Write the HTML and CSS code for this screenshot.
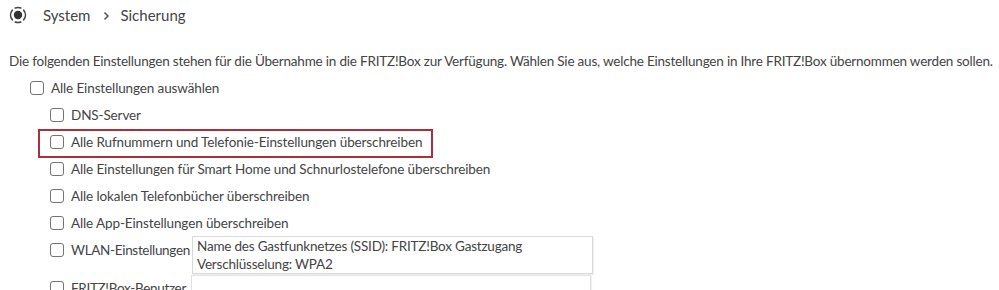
FILE: index.html
```html
<!DOCTYPE html>
<html lang="de">
<head>
    <meta charset="UTF-8">
    <meta name="viewport" content="width=device-width, initial-scale=1.0">
    <title>Sicherung</title>
    <link rel="stylesheet" href="styles.css">
</head>
<body>

<!-- Breadcrumb -->
<div class="crumbs">
    <svg class="crumb-icon" width="20" height="20" viewBox="0 0 20 20">
        <path d="M4.3 5.2 A7.6 7.6 0 0 0 4.3 14.8" fill="none" stroke="#444" stroke-width="1.6" stroke-linecap="round"/>
        <path d="M15.7 5.2 A7.6 7.6 0 0 1 15.7 14.8" fill="none" stroke="#444" stroke-width="1.6" stroke-linecap="round"/>
        <path d="M7.2 3 A7.6 7.6 0 0 1 12.8 3" fill="none" stroke="#444" stroke-width="1.6" stroke-linecap="round"/>
        <path d="M7.2 17 A7.6 7.6 0 0 0 12.8 17" fill="none" stroke="#444" stroke-width="1.6" stroke-linecap="round"/>
        <circle cx="10" cy="10" r="4.2" fill="#333"/>
    </svg>
    <span class="crumb">System</span>
    <svg class="crumb-sep" width="7" height="10" viewBox="0 0 7 10">
        <polyline points="1.5,1.5 5,5 1.5,8.5" fill="none" stroke="#555" stroke-width="1.5"/>
    </svg>
    <span class="crumb">Sicherung</span>
</div>

<p class="intro">Die folgenden Einstellungen stehen für die Übernahme in die FRITZ!Box zur Verfügung. Wählen Sie aus, welche Einstellungen in Ihre FRITZ!Box übernommen werden sollen.</p>

<!-- Auswahl -->
<ul class="options">
    <li>
        <label class="row"><span class="box"></span>Alle Einstellungen auswählen</label>
        <ul class="sub">
            <li><label class="row"><span class="box"></span>DNS-Server</label></li>
            <li><label class="row marked"><span class="box"></span>Alle Rufnummern und Telefonie-Einstellungen überschreiben</label></li>
            <li><label class="row"><span class="box"></span>Alle Einstellungen für Smart Home und Schnurlostelefone überschreiben</label></li>
            <li><label class="row"><span class="box"></span>Alle lokalen Telefonbücher überschreiben</label></li>
            <li><label class="row"><span class="box"></span>Alle App-Einstellungen überschreiben</label></li>
            <li class="with-info">
                <label class="row"><span class="box"></span>WLAN-Einstellungen</label>
                <div class="info">Name des Gastfunknetzes (SSID): FRITZ!Box Gastzugang<br>Verschlüsselung: WPA2</div>
            </li>
            <li class="with-info">
                <label class="row"><span class="box"></span>FRITZ!Box-Benutzer</label>
                <div class="info info-cut">&nbsp;</div>
            </li>
        </ul>
    </li>
</ul>

</body>
</html>
```
FILE: styles.css
```css
/* General page styling */
body {
    font-family: Lato, "Open Sans", sans-serif;
    font-size: 13.5px;
    letter-spacing: -0.2px;
    color: #444;
    margin: 0;
    padding: 0;
    background-color: #fff;
    overflow: hidden;
}

/* Breadcrumb */
.crumbs {
    display: flex;
    align-items: center;
    height: 30px;
    padding-left: 8px;
    font-size: 15px;
    letter-spacing: 0;
}

.crumb-icon {
    margin-right: 15px;
}

.crumb-sep {
    margin: 1px 10px 0 13px;
}

/* Intro text */
.intro {
    margin: 21px 0 0 9px;
    line-height: 20px;
}

/* Checkbox list */
.options,
.sub {
    list-style: none;
    margin: 0;
    padding: 0;
}

.options {
    margin-top: 3px;
    padding-left: 30px;
}

.sub {
    padding-left: 20px;
}

.row {
    display: flex;
    align-items: center;
    height: 27px;
    white-space: nowrap;
    letter-spacing: -0.12px;
}

.box {
    width: 12px;
    height: 12px;
    border: 1px solid #747474;
    border-radius: 3px;
    margin-right: 7px;
    flex-shrink: 0;
}

/* Highlighted entry */
.row.marked {
    position: relative;
    width: fit-content;
}

.row.marked::after {
    content: "";
    position: absolute;
    top: 1px;
    bottom: -3px;
    left: -12px;
    right: -11px;
    border: 2px solid #a8313b;
}

/* Entries with info box */
.with-info {
    display: flex;
    align-items: flex-start;
}

.with-info .row {
    width: 142px;
    flex-shrink: 0;
    letter-spacing: -0.32px;
}

.info {
    width: 395px;
    height: 36px;
    padding: 0 0 0 4px;
    border: 1px solid #d9d9d9;
    line-height: 18px;
    box-shadow: 1px 1px 1px rgba(0, 0, 0, 0.06);
}

.info-cut {
    margin: 1px 0 0 -1px;
    width: 394px;
    border-color: #e2e2e2;
}
```
